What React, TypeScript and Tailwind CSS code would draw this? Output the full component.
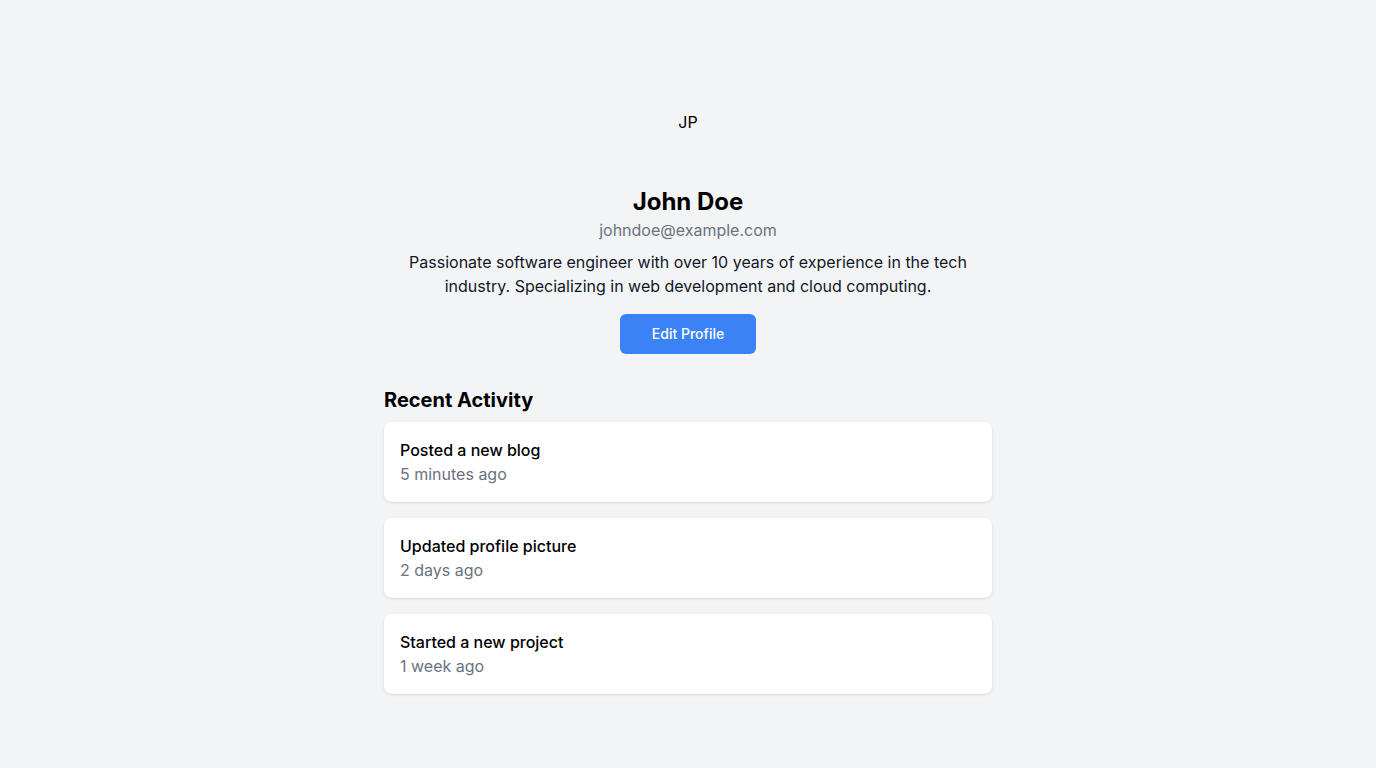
const activities = [
  { title: 'Posted a new blog', time: '5 minutes ago' },
  { title: 'Updated profile picture', time: '2 days ago' },
  { title: 'Started a new project', time: '1 week ago' },
];

export default function App() {
  return (
    <div className="min-h-screen bg-[#f3f4f6] flex items-center justify-center font-['Inter',sans-serif] text-black">
      <div className="w-full max-w-2xl px-8">
        <div className="flex flex-col items-center text-center">
          <div className="w-24 h-24 rounded-full flex items-center justify-center mb-4 text-base">JP</div>
          <h1 className="text-2xl font-bold">John Doe</h1>
          <p className="text-[#6b7280]">johndoe@example.com</p>
          <p className="mt-2 text-[#111827]">
            Passionate software engineer with over 10 years of experience in the tech industry. Specializing in web development and cloud computing.
          </p>
          <button className="mt-4 bg-[#3b82f6] text-white text-sm font-medium px-8 py-2.5 rounded-md">Edit Profile</button>
        </div>

        <h2 className="mt-8 mb-2 text-xl font-bold">Recent Activity</h2>
        <div className="space-y-4">
          {activities.map(a => (
            <div key={a.title} className="bg-white rounded-lg shadow-sm p-4">
              <p className="font-medium">{a.title}</p>
              <p className="text-[#6b7280]">{a.time}</p>
            </div>
          ))}
        </div>
      </div>
    </div>
  );
}
